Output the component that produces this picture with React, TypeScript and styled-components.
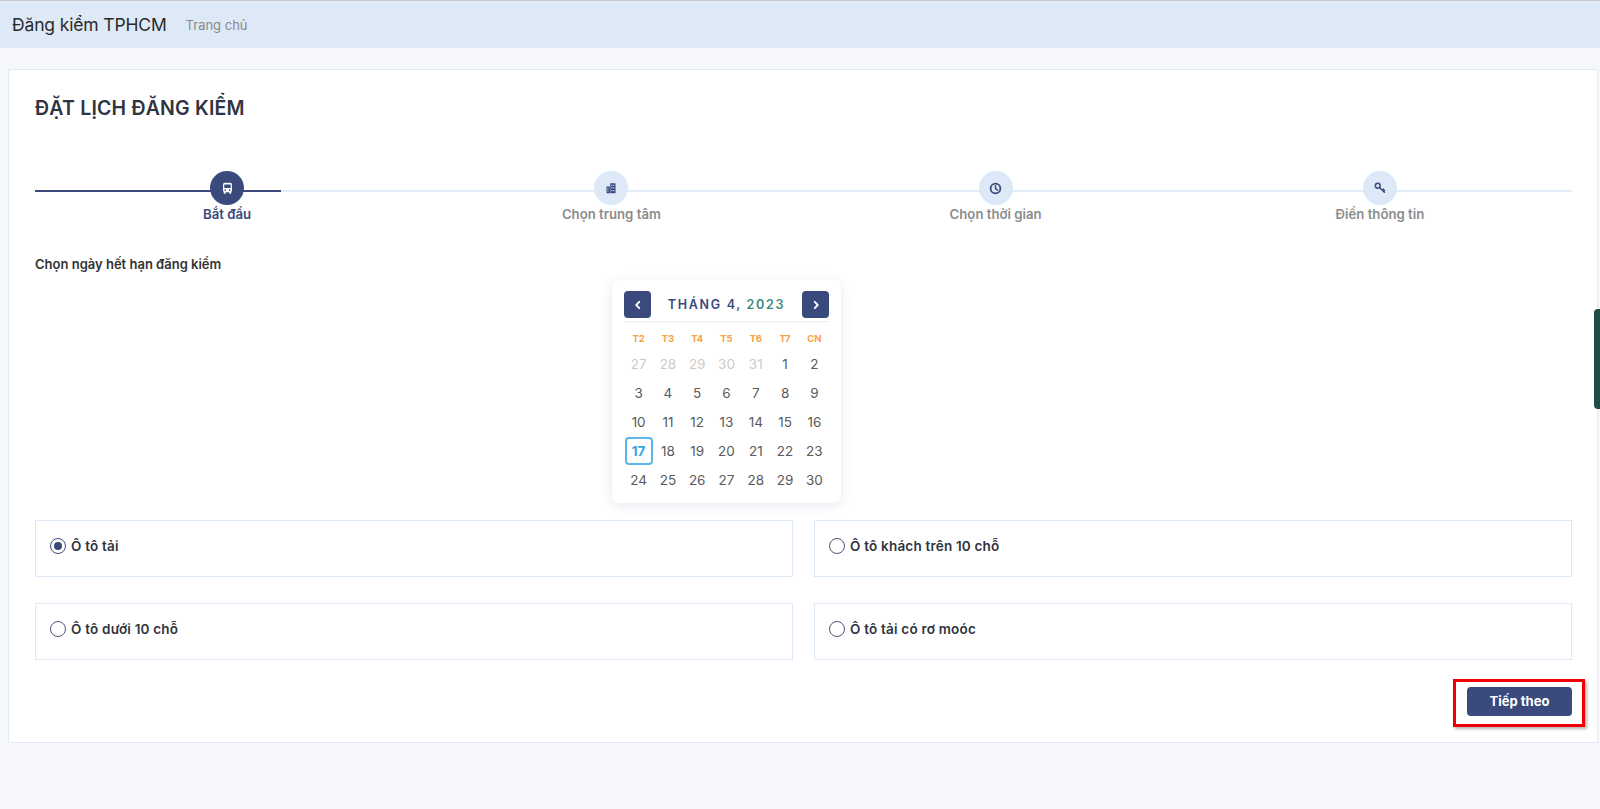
import styled, { createGlobalStyle } from "styled-components";

const GlobalStyle = createGlobalStyle`
  * { box-sizing: border-box; }
  body {
    margin: 0;
    background: #f5f7fb;
    font-family: Inter, "Noto Sans", "DejaVu Sans", sans-serif;
    color: #333;
  }
`;

const NAVY = "#3b4a7c";

const steps = [
  { label: "Bắt đầu", icon: "bus" },
  { label: "Chọn trung tâm", icon: "building" },
  { label: "Chọn thời gian", icon: "clock" },
  { label: "Điền thông tin", icon: "key" },
];

const weekdays = ["T2", "T3", "T4", "T5", "T6", "T7", "CN"];

const days: { d: number; muted?: boolean }[] = [
  ...[27, 28, 29, 30, 31].map((d) => ({ d, muted: true })),
  ...Array.from({ length: 30 }, (_, i) => ({ d: i + 1 })),
];

const vehicles = [
  { label: "Ô tô tải", checked: true },
  { label: "Ô tô khách trên 10 chỗ" },
  { label: "Ô tô dưới 10 chỗ" },
  { label: "Ô tô tải có rơ moóc" },
];

const StepIcon = ({ name, color }: { name: string; color: string }) => {
  if (name === "bus")
    return (
      <svg width="13" height="13" viewBox="0 0 16 16">
        <rect x="2.5" y="1" width="11" height="11.5" rx="2" fill={color} />
        <rect x="4" y="3" width="8" height="4.5" rx="0.6" fill={NAVY} />
        <circle cx="5.3" cy="10" r="1" fill={NAVY} />
        <circle cx="10.7" cy="10" r="1" fill={NAVY} />
        <rect x="3.5" y="12" width="2.2" height="2.5" rx="0.5" fill={color} />
        <rect x="10.3" y="12" width="2.2" height="2.5" rx="0.5" fill={color} />
      </svg>
    );
  if (name === "building")
    return (
      <svg width="12" height="12" viewBox="0 0 16 16" fill={color}>
        <path d="M7 1.5h6.5a.5.5 0 0 1 .5.5v13H7z" />
        <path d="M2 6h4.5v9H2z" />
        <path d="M8.5 3.5h1.3v1.8H8.5zm2.5 0h1.3v1.8H11zM8.5 7h1.3v1.8H8.5zm2.5 0h1.3v1.8H11zM8.5 10.5h1.3v1.8H8.5zm2.5 0h1.3v1.8H11z" fill="#dde9f7" />
        <path d="M3.2 8h1.2v1.5H3.2zm0 3h1.2v1.5H3.2z" fill="#dde9f7" />
      </svg>
    );
  if (name === "clock")
    return (
      <svg width="13" height="13" viewBox="0 0 16 16" fill="none" stroke={color}>
        <circle cx="8" cy="8" r="6" strokeWidth="2.2" />
        <path d="M8 4.6V8l2.4 2" strokeWidth="1.8" strokeLinecap="round" />
      </svg>
    );
  return (
    <svg width="12" height="12" viewBox="0 0 16 16" fill="none" stroke={color}>
      <circle cx="5" cy="5" r="3.2" strokeWidth="2" />
      <path d="M7.3 7.3l6.5 6.5M11 11l1.8-1.8M12.8 12.8l1.4-1.4" strokeWidth="1.9" strokeLinecap="round" />
    </svg>
  );
};

const Chevron = ({ dir }: { dir: "left" | "right" }) => (
  <svg width="10" height="10" viewBox="0 0 10 10" fill="none" stroke="#fff" strokeWidth="1.8" strokeLinecap="round" strokeLinejoin="round">
    {dir === "left" ? <path d="M6.3 1.8 3.2 5l3.1 3.2" /> : <path d="M3.7 1.8 6.8 5 3.7 8.2" />}
  </svg>
);

const App = () => {
  return (
    <>
      <GlobalStyle />
      <TopBar>
        <Brand>Đăng kiểm TPHCM</Brand>
        <NavLink>Trang chủ</NavLink>
      </TopBar>

      <Card>
        <Title>ĐẶT LỊCH ĐĂNG KIỂM</Title>

        <Stepper>
          <Track>
            <TrackFill />
          </Track>
          {steps.map((s, i) => (
            <Step key={s.label}>
              <StepCircle active={i === 0}>
                <StepIcon name={s.icon} color={i === 0 ? "#fff" : NAVY} />
              </StepCircle>
              <StepLabel active={i === 0}>{s.label}</StepLabel>
            </Step>
          ))}
        </Stepper>

        <FieldLabel>Chọn ngày hết hạn đăng kiểm</FieldLabel>

        <CalendarWrap>
          <Calendar>
            <CalHeader>
              <NavButton>
                <Chevron dir="left" />
              </NavButton>
              <MonthTitle>
                THÁNG 4, <Year>2023</Year>
              </MonthTitle>
              <NavButton>
                <Chevron dir="right" />
              </NavButton>
            </CalHeader>
            <CalGrid>
              {weekdays.map((w) => (
                <Weekday key={w}>{w}</Weekday>
              ))}
              {days.map((day, i) => (
                <DayCell key={i}>
                  <Day muted={day.muted} selected={!day.muted && day.d === 17}>
                    {day.d}
                  </Day>
                </DayCell>
              ))}
            </CalGrid>
          </Calendar>
        </CalendarWrap>

        <Options>
          {vehicles.map((v) => (
            <Option key={v.label}>
              <Radio checked={!!v.checked} />
              <OptionText>{v.label}</OptionText>
            </Option>
          ))}
        </Options>

        <Actions>
          <Highlight>
            <NextButton>Tiếp theo</NextButton>
          </Highlight>
        </Actions>
      </Card>

      <SideTab />
    </>
  );
};

const TopBar = styled.header`
  height: 48px;
  border-top: 1px solid #c9c9c9;
  background: #dde9f7;
  display: flex;
  align-items: center;
  padding: 0 12px;
  gap: 19px;
`;

const Brand = styled.div`
  font-size: 17.5px;
  color: #2a2a2a;
  letter-spacing: -0.15px;
`;

const NavLink = styled.a`
  font-size: 13px;
  color: #8a8a8a;
  margin-top: 1px;
`;

const Card = styled.main`
  margin: 21px 2px 0 8px;
  background: #fff;
  border: 1px solid #e1eaf5;
  padding: 26px 25px 26px 26px;
`;

const Title = styled.h1`
  margin: 0;
  font-size: 19.5px;
  line-height: 24px;
  font-weight: 600;
  color: #2f3440;
  letter-spacing: 0.2px;
`;

const Stepper = styled.div`
  position: relative;
  margin-top: 51px;
  display: grid;
  grid-template-columns: repeat(4, 1fr);
`;

const Track = styled.div`
  position: absolute;
  left: 0;
  right: 0;
  top: 19px;
  height: 2px;
  background: #e3edf9;
`;

const TrackFill = styled.div`
  width: 16%;
  height: 100%;
  background: ${NAVY};
`;

const Step = styled.div`
  position: relative;
  display: flex;
  flex-direction: column;
  align-items: center;
`;

const StepCircle = styled.div<{ active: boolean }>`
  width: 34px;
  height: 34px;
  border-radius: 50%;
  background: ${(p) => (p.active ? NAVY : "#dde9f7")};
  display: flex;
  align-items: center;
  justify-content: center;
`;

const StepLabel = styled.div<{ active: boolean }>`
  font-size: 13.2px;
  line-height: 18px;
  font-weight: 600;
  color: ${(p) => (p.active ? NAVY : "#8c8c8c")};
`;

const FieldLabel = styled.div`
  margin-top: 32px;
  font-size: 13px;
  line-height: 18px;
  font-weight: 600;
  color: #333;
`;

const CalendarWrap = styled.div`
  display: flex;
  justify-content: flex-start;
  margin-top: 7px;
  padding-left: 577px;
`;

const Calendar = styled.div`
  width: 229px;
  background: #fff;
  border-radius: 7px;
  box-shadow: 0 2px 12px rgba(60, 90, 150, 0.14);
  padding: 11px 12px 9px;
`;

const CalHeader = styled.div`
  display: flex;
  align-items: center;
  justify-content: space-between;
  padding-bottom: 3px;
  border-bottom: 1px solid #eef0f4;
  box-shadow: 0 1px 1px rgba(0, 0, 0, 0.02);
`;

const NavButton = styled.button`
  width: 27px;
  height: 27px;
  border: none;
  border-radius: 4px;
  background: ${NAVY};
  display: flex;
  align-items: center;
  justify-content: center;
  padding: 0;
`;

const MonthTitle = styled.div`
  font-size: 12.5px;
  font-weight: 600;
  letter-spacing: 1.7px;
  color: ${NAVY};
`;

const Year = styled.span`
  color: #3a8a80;
`;

const CalGrid = styled.div`
  display: grid;
  grid-template-columns: repeat(7, 1fr);
  grid-auto-rows: 28.8px;
  grid-template-rows: 24px;
  padding-top: 4px;
`;

const Weekday = styled.div`
  display: flex;
  align-items: center;
  justify-content: center;
  font-size: 9.5px;
  font-weight: 700;
  color: #f5a345;
`;

const DayCell = styled.div`
  display: flex;
  align-items: center;
  justify-content: center;
`;

const Day = styled.div<{ muted?: boolean; selected?: boolean }>`
  width: 28px;
  height: 28px;
  display: flex;
  align-items: center;
  justify-content: center;
  font-size: 13.5px;
  border-radius: 4px;
  border: 2px solid ${(p) => (p.selected ? "#5bb6ea" : "transparent")};
  color: ${(p) => (p.selected ? "#3aa3e2" : p.muted ? "#cbcbcb" : "#5a5a5a")};
  font-weight: ${(p) => (p.selected ? 700 : 400)};
`;

const Options = styled.div`
  margin-top: 17px;
  display: grid;
  grid-template-columns: 1fr 1fr;
  column-gap: 21px;
  row-gap: 26px;
`;

const Option = styled.label`
  height: 57px;
  border: 1px solid #dde9f7;
  display: flex;
  align-items: flex-start;
  gap: 5px;
  padding: 17px 14px 0;
`;

const Radio = styled.span<{ checked: boolean }>`
  width: 16px;
  height: 16px;
  border-radius: 50%;
  border: 1.5px solid ${(p) => (p.checked ? NAVY : "#4d5573")};
  display: flex;
  align-items: center;
  justify-content: center;
  flex-shrink: 0;
  &::after {
    content: "";
    width: 8px;
    height: 8px;
    border-radius: 50%;
    background: ${(p) => (p.checked ? NAVY : "transparent")};
  }
`;

const OptionText = styled.span`
  font-size: 13.5px;
  line-height: 16px;
  font-weight: 600;
  color: #2f3440;
  letter-spacing: 0.2px;
`;

const Actions = styled.div`
  display: flex;
  justify-content: flex-end;
  margin-top: 27px;
`;

const Highlight = styled.div`
  position: relative;
  &::after {
    content: "";
    position: absolute;
    top: -8px;
    right: -13px;
    bottom: -11px;
    left: -14px;
    border: 3.5px solid #f20000;
    box-shadow: 2px 2px 3px rgba(0, 0, 0, 0.3);
    pointer-events: none;
  }
`;

const NextButton = styled.button`
  width: 105px;
  height: 29px;
  border: none;
  border-radius: 4px;
  background: ${NAVY};
  color: #fff;
  font-family: inherit;
  font-size: 13px;
  font-weight: 700;
  display: block;
`;

const SideTab = styled.div`
  position: fixed;
  right: 0;
  top: 309px;
  width: 6px;
  height: 100px;
  background: #1f4d44;
  border-radius: 4px 0 0 4px;
`;

export default App;
